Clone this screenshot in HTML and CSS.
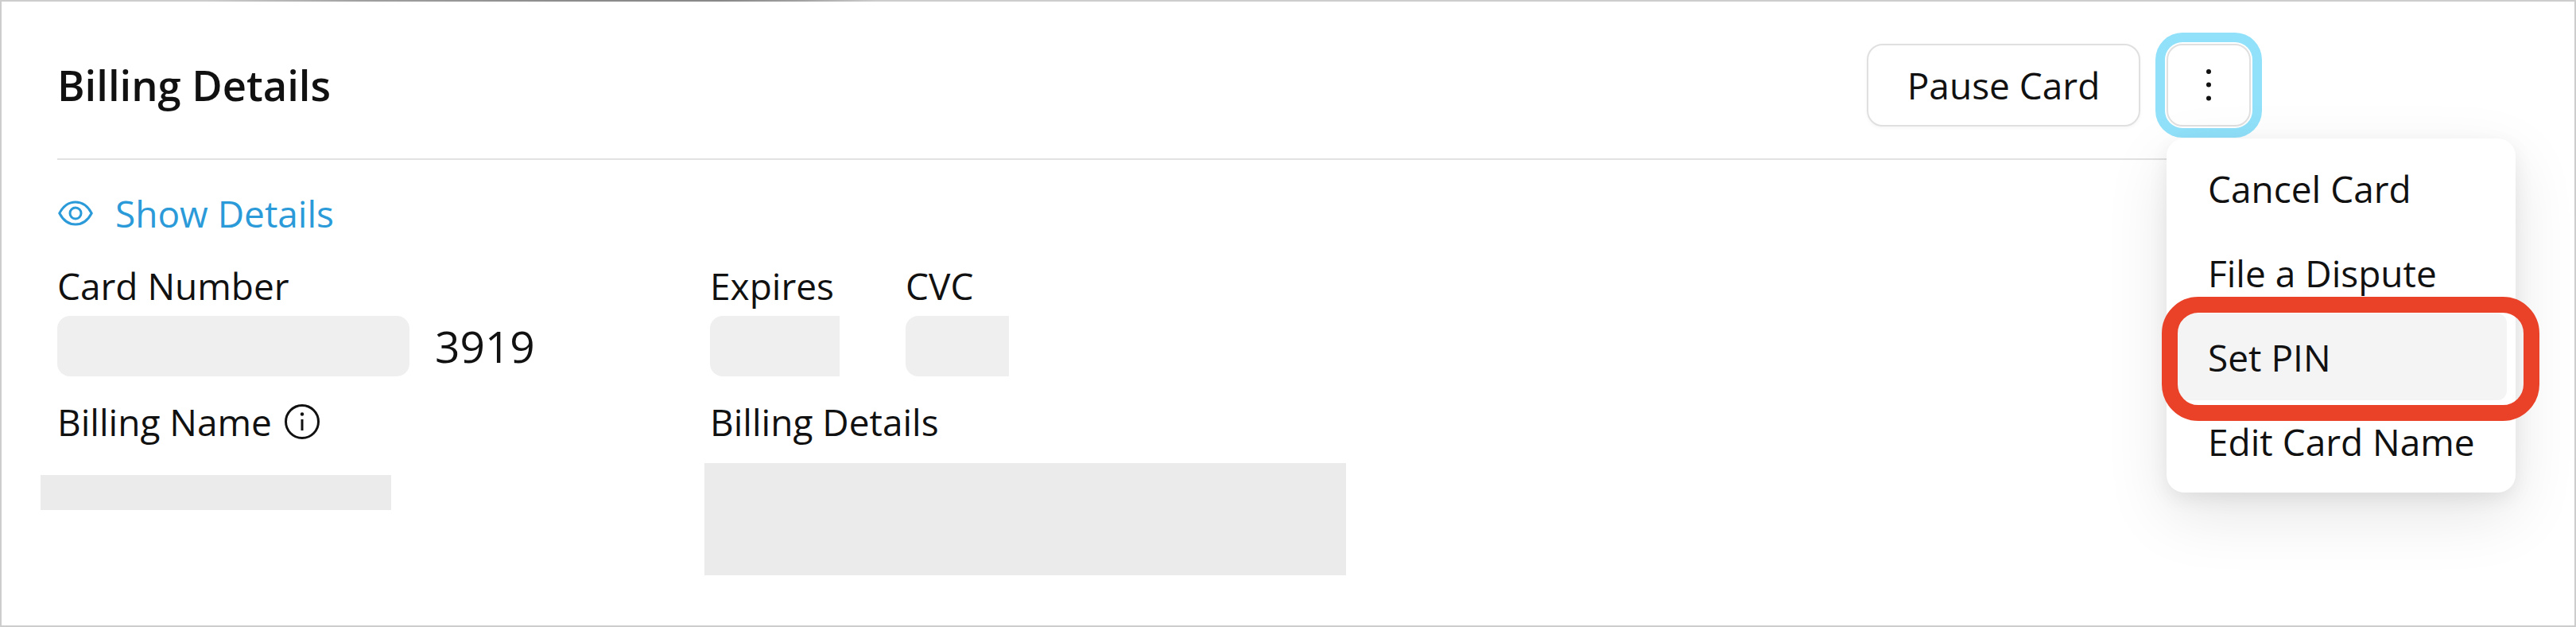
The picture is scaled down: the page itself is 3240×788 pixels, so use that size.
FILE: index.html
```html
<!DOCTYPE html>
<html lang="en">
<head>
<meta charset="utf-8">
<title>Billing Details</title>
<link rel="stylesheet" href="styles.css">
</head>
<body>
<main class="card">
  <header class="header">
    <h1 class="title">Billing Details</h1>
    <div class="actions">
      <button class="btn btn-pause" type="button">Pause Card</button>
      <button class="btn btn-more" type="button" aria-label="More">
        <svg class="dots" viewBox="0 0 8 42" width="8" height="42" aria-hidden="true">
          <circle cx="4" cy="4" r="3"/><circle cx="4" cy="20.500" r="3"/><circle cx="4" cy="37.500" r="3"/>
        </svg>
      </button>
    </div>
  </header>

  <a class="show" href="#">
    <svg class="eye" viewBox="0 0 44 32" width="44" height="32" fill="none" aria-hidden="true">
      <path d="M1.800 16C6.500 7 13.500 2 22 2s15.500 5 20.200 14C37.500 25 30.500 30 22 30S6.500 25 1.800 16Z"/>
      <circle cx="22" cy="16" r="7"/>
    </svg>
    <span>Show Details</span>
  </a>

  <section class="row row-card">
    <div class="col col-number">
      <div class="label">Card Number</div>
      <div class="number-line">
        <div class="field field-number"></div>
        <span class="last4">3919</span>
      </div>
    </div>
    <div class="col col-exp">
      <div class="label">Expires</div>
      <div class="field field-exp"></div>
    </div>
    <div class="col">
      <div class="label">CVC</div>
      <div class="field field-cvc"></div>
    </div>
  </section>

  <section class="row row-billing">
    <div class="col col-number">
      <div class="label label-info">Billing Name
        <svg class="info" viewBox="0 0 46 46" width="46" height="46" fill="none" aria-hidden="true">
          <circle cx="23" cy="23" r="20.500"/>
          <path d="M23 20v14"/>
          <circle class="info-dot" cx="23" cy="13.500" r="2.200"/>
        </svg>
      </div>
      <div class="redact redact-name"></div>
    </div>
    <div class="col">
      <div class="label">Billing Details</div>
      <div class="redact redact-address"></div>
    </div>
  </section>

  <nav class="menu">
    <div class="item">Cancel Card</div>
    <div class="item">File a Dispute</div>
    <div class="item item-active">Set PIN<span class="callout"></span></div>
    <div class="item">Edit Card Name</div>
  </nav>
</main>
</body>
</html>
```
FILE: styles.css
```css
* { box-sizing: border-box; }
html, body { margin: 0; padding: 0; background: #fff; }
body { width: 3240px; height: 788px; overflow: hidden; font-family: "Open Sans", "Liberation Sans", sans-serif; color: #111; }

.card {
  position: relative;
  width: 3240px;
  height: 788px;
  border: 2px solid #cdcdcd;
  background: #fff;
  padding: 0 407px 0 70px;
}
.card::before {
  content: "";
  position: absolute;
  top: -2px;
  left: -2px;
  right: -2px;
  height: 2px;
  background: linear-gradient(90deg, #cdcdcd 8%, #a0a0a0 14%, #8c8c8c 22%, #888 28%, #a0a0a0 31%, #cdcdcd 34%);
}

.header {
  display: flex;
  align-items: center;
  height: 199px;
  padding-top: 52px;
  padding-bottom: 39px;
  border-bottom: 2px solid #e2e2e2;
}
.title { margin: 0; font-size: 52.500px; line-height: 64px; font-weight: 600; color: #111; }

.actions { display: flex; gap: 33px; margin-left: auto; }
.btn {
  display: flex;
  align-items: center;
  justify-content: center;
  height: 104px;
  padding: 0;
  border: 2px solid #e0e0e0;
  border-radius: 20px;
  background: #fff;
  font: 400 46px/60px "Open Sans", "Liberation Sans", sans-serif;
  color: #111;
  box-shadow: 0 2px 4px rgba(0, 0, 0, .04);
}
.btn-pause { width: 344px; }
.btn-more { width: 106px; box-shadow: 0 0 0 2px #fff, 0 0 0 14px #91e1fb; }
.dots { fill: #111; }

.show {
  display: flex;
  align-items: center;
  gap: 28px;
  margin-top: 37px;
  margin-left: 1px;
  font-size: 46px;
  line-height: 60px;
  color: #2b9ad9;
  text-decoration: none;
}
.eye { stroke: #2b9ad9; stroke-width: 3; }

.row { display: flex; }
.row-card { margin-top: 31px; }
.row-billing { margin-top: 27px; }
.col { display: flex; flex-direction: column; }
.col-number { width: 821px; }
.col-exp { width: 246px; }
.label { font-size: 46px; line-height: 60px; color: #111; }
.label-info { display: flex; align-items: center; gap: 15px; }
.info { stroke: #111; stroke-width: 3; }
.info-dot { fill: #111; stroke: none; }

.number-line { display: flex; align-items: center; gap: 32px; margin-top: 8px; }
.field { height: 76px; background: #efefef; border-radius: 16px; }
.col-exp .field, .col:last-child > .field { margin-top: 8px; }
.field-number { width: 443px; }
.field-exp { width: 163px; border-radius: 16px 0 0 16px; }
.field-cvc { width: 130px; border-radius: 16px 0 0 16px; }
.last4 { font-size: 55px; line-height: 60px; color: #111; }

.redact { background: #ebebeb; }
.redact-name { width: 441px; height: 44px; margin: 37px 0 0 -21px; }
.redact-address { width: 807px; height: 141px; margin: 22px 0 0 -7px; }

.menu {
  position: absolute;
  left: 2723px;
  top: 172px;
  width: 439px;
  height: 445px;
  padding: 11px;
  border-radius: 22px;
  background: #fff;
  box-shadow: 0 8px 24px rgba(0, 0, 0, .07), 0 28px 80px rgba(0, 0, 0, .10);
}
.item {
  position: relative;
  height: 106px;
  padding: 0 0 0 41px;
  font-size: 46px;
  line-height: 104px;
  border-radius: 12px;
  color: #111;
  white-space: nowrap;
}
.item-active { background: #f4f4f4; margin-top: -3px; height: 109px; padding-top: 3px; }
.callout {
  position: absolute;
  top: -21px;
  bottom: -26px;
  left: -17px;
  right: -41px;
  border: 20px solid #ea4228;
  border-radius: 46px;
}
```
